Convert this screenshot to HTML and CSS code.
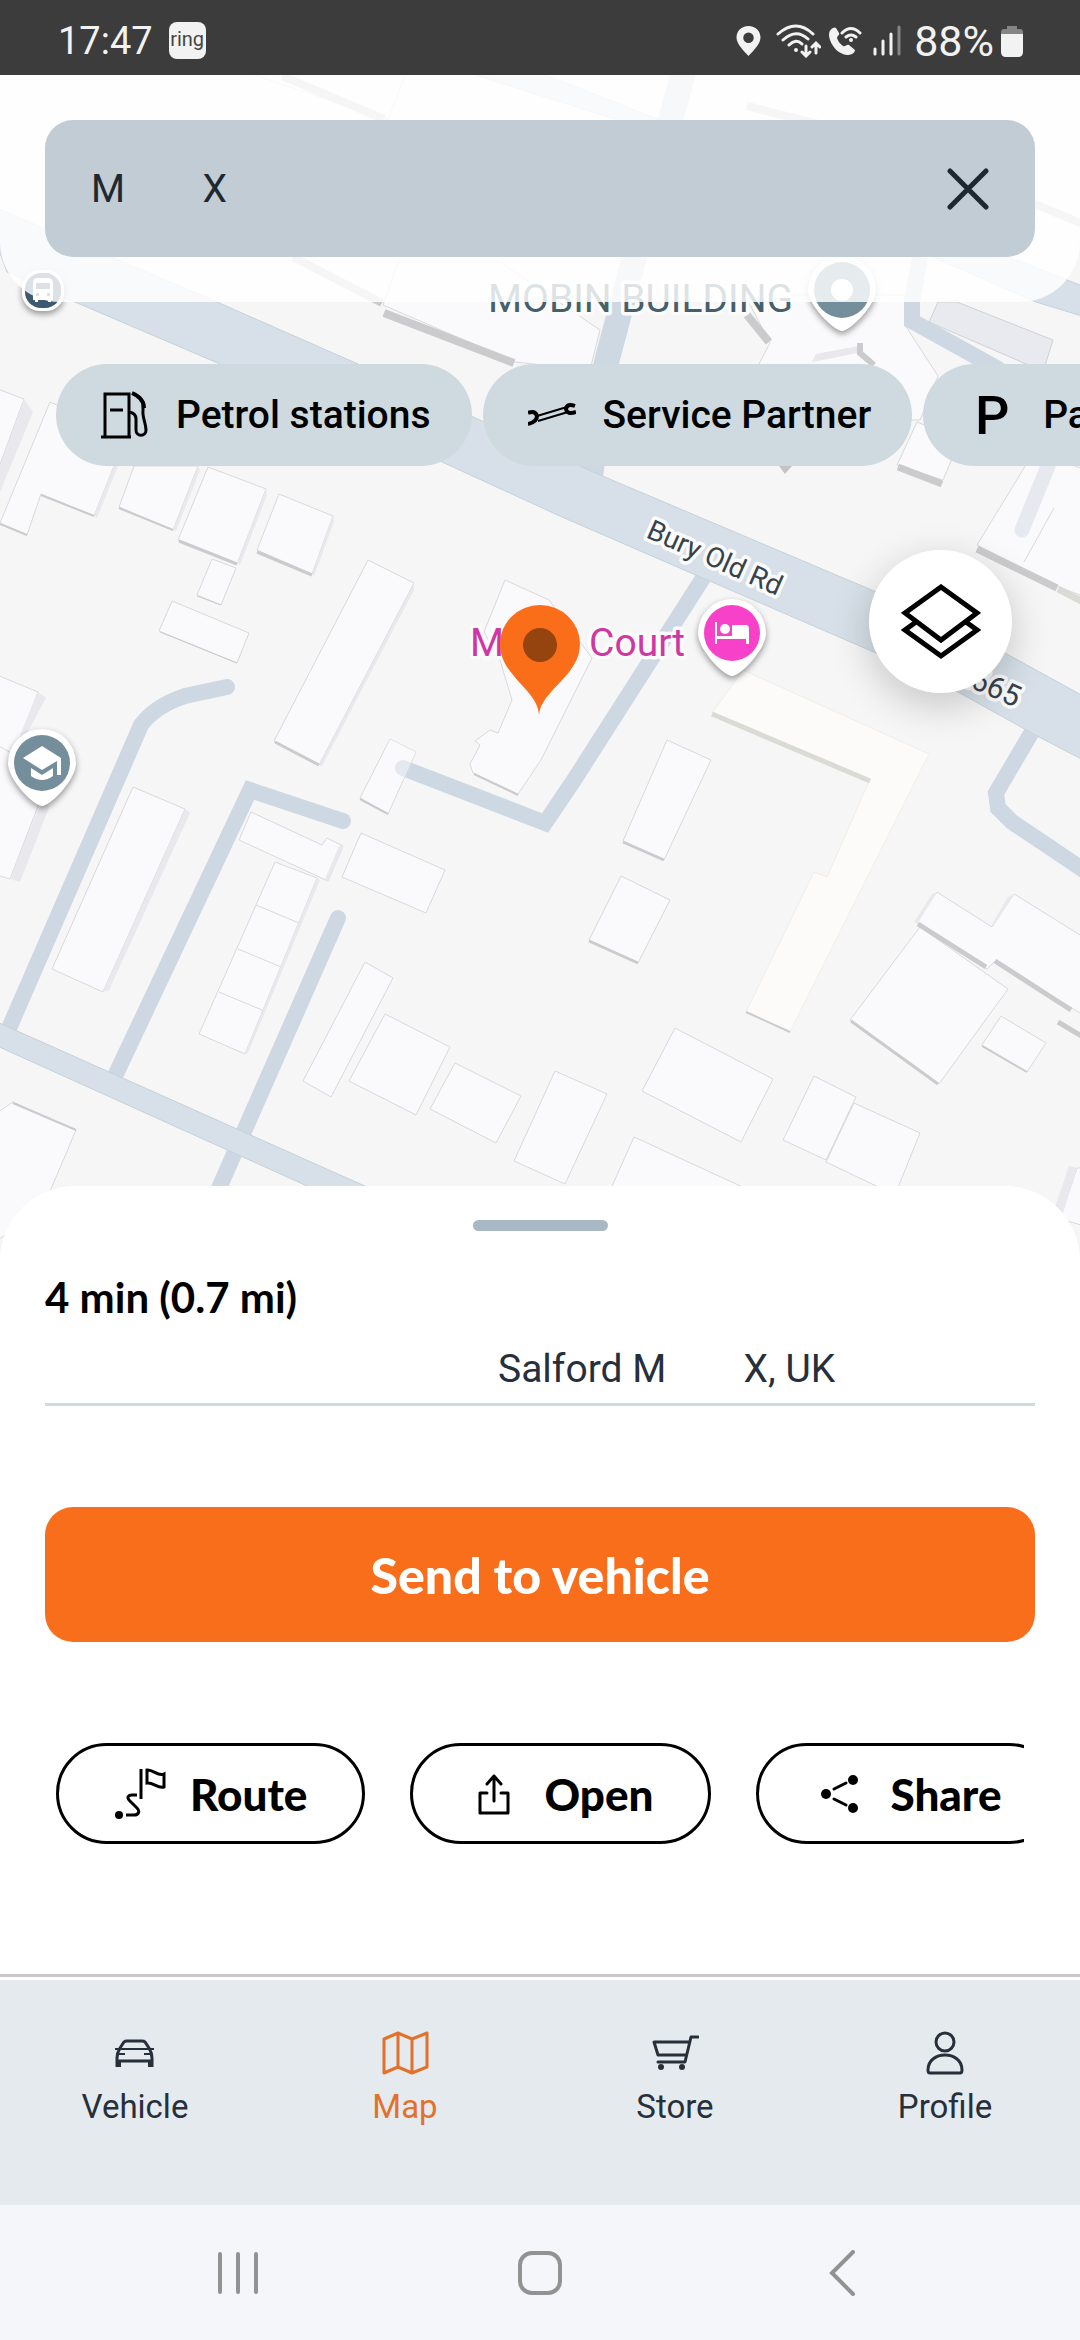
FILE: index.html
```html
<!DOCTYPE html>
<html lang="en">
<head>
    <meta charset="UTF-8">
    <meta name="viewport" content="width=device-width, initial-scale=1.0">
    <title>Map</title>
    <link rel="stylesheet" href="styles.css">
</head>
<body>
    <div class="status-bar">
        <span>17:47</span>
        <span class="app-badge">ring</span>
        <div class="status-icons">
            <svg width="25" height="32" viewBox="0 0 25 32"><path fill="#f2f2f2" fill-rule="evenodd" d="M12.500 1C5.500 1 .5 6 .5 12.500 .5 19 8 26 12.500 31 17 26 24.500 19 24.500 12.500 24.500 6 19.500 1 12.500 1zM12.500 7.500a5 5 0 1 1 0 10.500 5 5 0 0 1 0-10.500z"/></svg>
            <svg class="wifi" width="45" height="34" viewBox="0 0 45 34" fill="none" stroke="#f2f2f2" stroke-width="3" stroke-linecap="round"><path d="M2 10Q20-6 37 10M7 16Q20 4 32 15M13 21Q20 14 26 20M30 22v10m-4-4 4 4 4-4M40 29V19m-4 4 4-4 4 4"/><circle cx="20" cy="26" r="2" fill="#f2f2f2" stroke="none"/></svg>
            <svg width="34" height="32" viewBox="0 0 34 32"><path fill="#f2f2f2" d="M5 3C1 5 0 9 2 15c3 8 9 14 17 15 4 0 8-2 8-5l-6-5c-2-1-4 2-6 1-3-2-5-5-6-8 0-2 3-3 2-5L8 3Q7 2 5 3z"/><path d="M14 8Q23-1 32 8M18 12q5-4 10 0" fill="none" stroke="#f2f2f2" stroke-width="3" stroke-linecap="round"/><circle cx="23" cy="15" r="2" fill="#f2f2f2"/></svg>
            <svg class="signal" width="28" height="31" viewBox="0 0 28 31" fill="none" stroke-width="3" stroke-linecap="round"><path stroke="#f2f2f2" d="M2 24v5M10 16v13M18 9v20"/><path stroke="#868686" d="M26 2v27"/></svg>
            <span class="battery-level">88%</span>
            <svg width="22" height="32" viewBox="0 0 22 32"><path fill="#858585" d="M6 1h10v3h3q3 0 3 3v3H0V7q0-3 3-3h3z"/><path fill="#f2f2f2" d="M0 9h22v18q0 5-5 5H5q-5 0-5-5z"/></svg>
        </div>
    </div>

    <main class="map">
        <svg class="map-canvas" viewBox="0 75 1080 1186" preserveAspectRatio="xMidYMin slice">
            <!-- buildings -->
            <g class="building">
                <path d="M240 75H405L388 120 240 70zM398 262H500L600 330 590 370 515 362 383 305z"/>
                <path d="M745 295H905V325L938 376 920 420H785L740 400 770 343z"/>
                <path d="M-5 388 24 399-5 478z"/>
                <path d="M50 402 100 424 114 466 94 516 41 494 27 535 0 523z"/>
                <path d="M134 466H198L173 530 119 507z"/>
                <path d="M208 467 266 489 237 564 178 540z"/>
                <path d="M279 494 333 516 312 574 257 550z"/>
                <path d="M212 559 236 568 221 605 197 595z"/>
                <path d="M172 601 249 633 237 663 159 631z"/>
                <path d="M368 560 414 583 319 765 274 741z"/>
                <path d="M-3 675 38 692 10 765-3 758z"/>
                <path d="M-3 745 50 775 10 879-3 875z"/>
                <path d="M505 580 549 600 592 658 541 760 518 794 473 773 470 764 480 745 475 741 490 730 498 733 512 700 500 660 484 632z"/>
                <path d="M390 739 416 752 388 814 360 798z"/>
                <path d="M667 740 711 760 664 860 623 841z"/>
                <path d="M621 876 670 900 638 963 589 940z"/>
                <path d="M675 1028 773 1079 741 1142 642 1091z"/>
                <path d="M634 1137 760 1195 608 1195z"/>
                <path d="M814 1076 856 1097 826 1160 783 1140z"/>
                <path d="M854 1103 920 1133 895 1195 826 1162z"/>
                <path d="M555 1071 607 1094 565 1184 514 1161z"/>
                <path d="M937 892 992 927 1014 894 1085 938V1016L995 961 987 969 916 922z"/>
                <path d="M920 927 1008 989 939 1084 850 1020z"/>
                <path d="M1001 1016 1046 1043 1027 1072 982 1045z"/>
                <path d="M1077 1168H1085V1226L1060 1219z"/>
                <path d="M133 787 185 809 103 992 52 969z"/>
                <path d="M251 812 322 845 327 838 343 846 328 881 239 840z"/>
                <path d="M275 862 317 878 245 1054 199 1034zM256 905 299 923M238 949 281 967M219 992 262 1010"/>
                <path d="M361 833 445 870 426 913 342 877z"/>
                <path d="M365 962 393 978 331 1097 303 1081z"/>
                <path d="M385 1014 450 1047 416 1115 349 1081z"/>
                <path d="M455 1063 521 1096 496 1143 430 1109z"/>
                <path d="M-3 1113 13 1102 76 1130 40 1215-3 1240z"/>
                <path d="M917 422 960 440 943 480 897 465z"/>
                <path d="M1035 450 1085 470V597L1057 586 977 545z"/>
                <path d="M1054 508 1024 562"/>
            </g>
            <path class="building-grey" d="M938 302 957 302 1053 340 1043 372 1017 360 929 322z"/>
            <path class="building-beige" d="M743 670 929 754 790 1032 746 1012 814 872 827 877 870 779 712 713z"/>

            <!-- roofs seen from the side -->
            <g class="shade-light">
                <path d="M24 399 33 412 0 492-3 475z"/>
                <path d="M114 466 118 466 97 518 94 516z"/>
                <path d="M198 466 200 470 176 531 173 530z"/>
                <path d="M266 489 267 495 240 565 237 564z"/>
                <path d="M333 516 334 522 314 576 312 574z"/>
                <path d="M414 584 414 590 322 766 319 765z"/>
                <path d="M38 692 46 698 26 735 20 735z"/>
                <path d="M40 805 50 805 20 882 10 879z"/>
                <path d="M185 809 190 813 109 990 103 992z"/>
                <path d="M343 846 328 881 325 879 339 846z"/>
                <path d="M317 878 320 880 248 1053 245 1054z"/>
                <path d="M937 892 932 894 914 922 918 923z"/>
                <path d="M1014 894 1008 897 992 924 993 927z"/>
                <path d="M1069 1166 1077 1168 1062 1216 1054 1210z"/>
                <path d="M812 362 816 354 858 346 863 352z"/>
            </g>
            <g class="shade-dark">
                <path d="M282 76 384 119M293 257 382 303M384 313 514 363" stroke-width="8"/>
                <path d="M747 106 850 132M1030 202 1085 225M747 315 769 342" stroke-width="8"/>
                <path d="M860 343V353L874 365" stroke-width="6"/>
                <path d="M898 467 942 484M977 549 1057 588" stroke-width="7"/>
                <path d="M41 495 94 516M119 508 173 530M0 524 27 535" stroke-width="2"/>
                <path d="M179 541 237 564M257 552 312 575M275 742 319 765" stroke-width="3"/>
                <path d="M160 632 237 663M197 596 221 605" stroke-width="1"/>
                <path d="M360 799 388 814M474 774 518 795" stroke-width="2"/>
                <path d="M623 842 664 860M589 941 638 963" stroke-width="3"/>
                <path d="M918 924 986 967M995 961 1071 1010M1058 1022 1085 1038" stroke-width="5"/>
                <path d="M851 1021 938 1084" stroke-width="3"/>
                <path d="M982 1046 1027 1072M13 1103 76 1130M746 1012 790 1032" stroke-width="2"/>
            </g>
            <path d="M712 714 870 781" stroke="#dbdbd6" stroke-width="5"/>
            <path d="M1058 589 1085 603" stroke="#dbdbd6" stroke-width="7"/>
            <path d="M779 466h13l-7 8z" fill="#c4c4c6"/>

            <!-- roads -->
            <g class="road-small">
                <path d="M227 687 185 696Q155 706 141 725L10 1026" stroke-linecap="round"/>
                <path d="M343 821 250 790 115 1076"/>
                <circle cx="343" cy="821" r="8"/>
                <path d="M338 918 216 1195" stroke-linecap="round"/>
                <path d="M403 768 545 823 574 780 705 575" stroke-linecap="round"/>
                <path d="M1033 730 996 793 998 808 1012 822 1085 871"/>
                <path d="M920 257 912 302V321L1000 370"/>
                <path d="M684 70 606 364 590 480" stroke-width="25"/>
            </g>
            <path class="building-faint" d="M390 739 416 752 403 781 376 770z"/>
            <path d="M1048 466 1022 530" stroke="#e6eaf0" stroke-width="15" stroke-linecap="round"/>
            <path class="road" d="M444 65 520 65 1085 287V317L1036 302 624 122z"/>
            <path class="road" d="M-3 208 43 228 217 302 358 364 593 472 874 591 1005 653 1085 697V761L1039 737 958 692 876 653 698 576 562 517 442 462 220 364 75 302 7 272-3 245z"/>
            <path class="road" d="M-3 1022 385 1195H327L-3 1046z"/>

            <!-- labels -->
            <g class="map-label">
                <text x="488" y="312" font-size="39" fill="#46606b">MOBIN BUILDING</text>
                <text x="470" y="656" font-size="39" fill="#cf37a3">M</text>
                <text x="589" y="656" font-size="39" fill="#cf37a3">Court</text>
                <text transform="translate(645 537) rotate(24)" font-size="28" fill="#37434c">Bury Old Rd</text>
                <text transform="translate(951 679) rotate(24)" font-size="30" fill="#37434c">A665</text>
            </g>

            <!-- places -->
            <g class="place">
                <path d="M842 331C834 331 808 305 808 290a34 34 0 0 1 68 0C876 305 850 331 842 331z"/>
                <path d="M42 806C34 806 8 780 8 763a34 34 0 0 1 68 0C76 780 50 806 42 806z"/>
                <path d="M732 676C724 676 698 650 698 633a34 34 0 0 1 68 0C766 650 740 676 732 676z"/>
                <rect x="22" y="270" width="42" height="41" rx="18"/>
            </g>
            <circle cx="842" cy="290" r="28" fill="#758e9b"/>
            <circle cx="842" cy="290" r="11" fill="#fff"/>
            <rect x="25" y="273" width="36" height="35" rx="16" fill="#3f5a70"/>
            <path fill="#fff" fill-rule="evenodd" d="M38 278h10q5 0 5 5v17h-2v2h-3v-2H38v2h-3v-2h-2v-17q0-5 5-5zM36 283v6h14v-6zM36 293v3h3v-3zM47 293v3h3v-3z"/>
            <circle cx="42" cy="763" r="28" fill="#758e9b"/>
            <path fill="#fff" d="M23 758 42 746 61 758V775H57V761L42 770zM31 768 42 775 53 768V776Q42 784 31 776z"/>
            <circle cx="732" cy="633" r="28" fill="#f741c8"/>
            <path fill="#fff" d="M715 622h2v14h15v-11h14q3 0 3 4v15h-3v-5h-29v5h-2z"/>
            <circle cx="725" cy="629" r="5" fill="#fff"/>
            <path fill="#fa6e19" d="M539 715C538 690 500 676 500 644a40 39 0 0 1 80 0C580 676 541 690 539 715z"/>
            <circle cx="540" cy="645" r="17" fill="#95430f"/>
        </svg>

        <header class="search-panel">
            <form class="search">
                <input type="text" aria-label="Search" value="M        X">
                <button type="button" class="clear-btn" aria-label="Clear">
                    <svg width="42" height="42" viewBox="0 0 42 42" fill="none" stroke="#1d2830" stroke-width="5" stroke-linecap="round"><path d="M3 3 39 39M39 3 3 39"/></svg>
                </button>
            </form>
        </header>

        <div class="chips">
            <button class="chip">
                <svg width="48" height="48" viewBox="0 0 48 48" fill="none" stroke="#000" stroke-width="3"><path d="M4 46V3H28V46M0 46H30M9 19H22"/><path d="M31 2C38 5 43 10 43 17" stroke-width="4"/><path d="M42 10V19C41 26 45 32 45 39 45 46 35 46 35 39V28Q35 22 28 21"/></svg>
                Petrol stations
            </button>
            <button class="chip">
                <svg width="48" height="48" viewBox="0 0 48 48" fill="none" stroke="#000"><path d="M0 22Q7 19 9 25 9 31 0 33M47 15Q39 12 38 18 39 24 48 21" stroke-width="4"/><path d="M9 25 39 16M10 30 40 21" stroke-width="2"/></svg>
                Service Partner
            </button>
            <button class="chip">
                <span class="parking-icon">P</span>
                Parking
            </button>
        </div>

        <button class="layers-btn" aria-label="Map layers">
            <svg width="80" height="76" viewBox="0 0 80 76" fill="none" stroke="#000" stroke-width="5"><path d="M40 3 76 29 40 56 4 29z"/><path d="M15 38 4 46 40 72 76 46 65 38"/></svg>
        </button>
    </main>

    <section class="sheet">
        <div class="handle"></div>
        <h1>4 min (0.7 mi)</h1>
        <p class="address">Salford M        X, UK</p>
        <button class="send-btn">Send to vehicle</button>
        <div class="actions">
            <button class="action">
                <svg width="60" height="60" viewBox="0 0 60 60" fill="none" stroke="#000" stroke-width="3"><circle cx="9" cy="51" r="4" fill="#000" stroke="none"/><path d="M16 51H24C29 51 30 47 27 44L19 36C17 33 18 31 22 31H27M31 5V35M37 6C43 5 48 13 54 10V23C48 25 43 18 37 19z"/></svg>
                Route
            </button>
            <button class="action">
                <svg width="60" height="60" viewBox="0 0 60 60" fill="none" stroke="#000" stroke-width="3" stroke-linecap="round" stroke-linejoin="round"><path d="M23 29H16V49H44V29H37M30 37V12M23 20 30 12 37 20"/></svg>
                Open
            </button>
            <button class="action">
                <svg width="60" height="60" viewBox="0 0 60 60" stroke="#000" stroke-width="3" stroke-linecap="round"><path d="M24 25 36 19M24 35 36 41"/><g stroke="none"><circle cx="16" cy="30" r="5"/><circle cx="43" cy="16" r="5"/><circle cx="43" cy="44" r="5"/></g></svg>
                Share
            </button>
        </div>
    </section>

    <nav class="tabs">
        <a class="tab" href="#">
            <svg width="48" height="48" viewBox="0 0 48 48" fill="none" stroke="currentColor" stroke-width="3"><path d="M9 19 13 13Q14 12 16 12H31Q33 12 34 13L38 19Q41 24 41 29V38M6 38V29Q6 24 9 19M6 32H41"/><path d="M4 20H43M6 25H14M41 25H33" stroke-width="2"/><path d="M8 32V38M39 32V38" stroke-width="4"/></svg>
            Vehicle
        </a>
        <a class="tab active" href="#">
            <svg width="48" height="48" viewBox="0 0 48 48" fill="none" stroke="currentColor" stroke-width="3" stroke-linejoin="round"><path d="M3 10 17 4 31 10 46 4V38L31 44 17 38 3 44zM17 4V38M31 10V44"/></svg>
            Map
        </a>
        <a class="tab" href="#">
            <svg width="48" height="48" viewBox="0 0 48 48" fill="none" stroke="currentColor" stroke-width="3" stroke-linecap="round" stroke-linejoin="round"><path d="M47 8H40L34 33H7M38 13H3L7 26H35"/><g fill="currentColor" stroke="none"><circle cx="10" cy="38" r="3"/><circle cx="31" cy="38" r="3"/></g></svg>
            Store
        </a>
        <a class="tab" href="#">
            <svg width="48" height="48" viewBox="0 0 48 48" fill="none" stroke="currentColor" stroke-width="3"><circle cx="24" cy="13" r="9"/><path d="M7 41C7 21 41 21 41 41Q41 44 39 44H9Q7 44 7 41z"/></svg>
            Profile
        </a>
    </nav>

    <div class="system-bar">
        <button aria-label="Recent apps"><svg width="44" height="46" viewBox="0 0 44 46" stroke="#929292" stroke-width="4" stroke-linecap="round"><path d="M4 4V42M22 4V42M40 4V42"/></svg></button>
        <button aria-label="Home"><svg width="46" height="46" viewBox="0 0 46 46" fill="none" stroke="#929292" stroke-width="4"><rect x="3" y="3" width="40" height="40" rx="12"/></svg></button>
        <button aria-label="Back"><svg width="28" height="46" viewBox="0 0 28 46" fill="none" stroke="#929292" stroke-width="4" stroke-linecap="round"><path d="M25 2 4 23 25 44"/></svg></button>
    </div>
</body>
</html>
```
FILE: styles.css
```css
* {
    box-sizing: border-box;
}
body {
    font-family: Roboto, "Liberation Sans", sans-serif;
    margin: 0;
    min-height: 100vh;
    display: flex;
    flex-direction: column;
    background-color: #fff;
    color: #27303a;
}
button {
    font-family: inherit;
    border: none;
    padding: 0;
    cursor: pointer;
}
svg {
    display: block;
    flex-shrink: 0;
}

/* Status bar */
.status-bar {
    display: flex;
    align-items: center;
    gap: 16px;
    height: 75px;
    padding: 6px 57px 0 58px;
    background-color: #3c3c3c;
    color: #f2f2f2;
    font-size: 38px;
}
.app-badge {
    width: 37px;
    height: 37px;
    border-radius: 8px;
    background-color: #f2f2f2;
    color: #444;
    font-size: 20px;
    line-height: 34px;
    text-align: center;
}
.status-icons {
    display: flex;
    align-items: center;
    gap: 7px;
    margin-left: auto;
}
.wifi {
    margin-left: 8px;
}
.signal {
    margin-left: 4px;
    margin-right: 6px;
}
.battery-level {
    font-size: 43px;
}

/* Map */
.map {
    position: relative;
    flex: 1;
    min-height: 700px;
    padding-bottom: 75px;
    overflow: hidden;
    background-color: #f6f6f6;
}
.map-canvas {
    position: absolute;
    inset: 0;
    width: 100%;
    height: 100%;
}
.building {
    fill: #fafafc;
    stroke: #d9d9dc;
}
.building-grey {
    fill: #e9eaef;
    stroke: #d0d1d6;
}
.building-beige {
    fill: #fcfbf9;
    stroke: #efeeea;
}
.building-faint {
    fill: #fafafc;
    opacity: 0.5;
}
.shade-light {
    fill: #e9e9ed;
}
.shade-dark {
    fill: none;
    stroke: #cbcbcd;
}
.road {
    fill: #d7e0e8;
    stroke: #c6d1da;
}
.road-small {
    fill: none;
    stroke: #cdd8e3;
    stroke-width: 16px;
}
.road-small circle {
    fill: #cdd8e3;
    stroke: none;
}
.map-label {
    stroke: #fbfbfc;
    stroke-width: 7px;
    stroke-linejoin: round;
    paint-order: stroke;
}
.place {
    fill: #fff;
    filter: drop-shadow(0 3px 3px rgba(0, 0, 0, 0.4));
}

.search-panel {
    position: relative;
    padding: 45px;
    border-radius: 0 0 60px 60px;
    background-color: rgba(255, 255, 255, 0.82);
}
.search {
    display: flex;
    align-items: center;
    height: 137px;
    padding: 0 46px;
    border-radius: 28px;
    background-color: #c2ccd5;
}
.search input {
    flex: 1;
    min-width: 0;
    padding: 0;
    border: none;
    outline: none;
    background: none;
    color: #1d2830;
    font-family: inherit;
    font-size: 39px;
}
.clear-btn {
    background: none;
}
.chips {
    position: relative;
    display: flex;
    gap: 11px;
    padding: 62px 0 0 56px;
    overflow: hidden;
}
.chip {
    display: flex;
    flex-shrink: 0;
    align-items: center;
    gap: 27px;
    height: 102px;
    padding: 0 41px 0 45px;
    border-radius: 51px;
    background-color: #cfdae0;
    color: #000;
    font-size: 39px;
    font-weight: 500;
}
.parking-icon {
    width: 48px;
    font-size: 54px;
    text-align: center;
}
.layers-btn {
    position: relative;
    display: flex;
    align-items: center;
    justify-content: center;
    width: 143px;
    height: 143px;
    margin: 84px 68px 0 auto;
    border-radius: 50%;
    background-color: #fff;
    box-shadow: 0 12px 40px rgba(0, 0, 0, 0.2);
}

/* Bottom sheet */
.sheet {
    position: relative;
    margin-top: -75px;
    padding: 34px 45px 130px;
    border-radius: 75px 75px 0 0;
    background-color: #fff;
}
.handle {
    width: 135px;
    height: 11px;
    margin: 0 auto 41px;
    border-radius: 6px;
    background-color: #a8b8c4;
}
h1 {
    margin: 0 0 24px;
    color: #000;
    font-family: Lato, sans-serif;
    font-size: 42px;
    line-height: 50px;
}
.address {
    margin: 0 0 101px;
    padding: 0 0 11px 453px;
    border-bottom: 3px solid #d2dade;
    font-size: 39px;
    line-height: 46px;
    white-space: pre;
}
.send-btn {
    width: 100%;
    height: 135px;
    margin-bottom: 101px;
    border-radius: 28px;
    background-color: #f96e1b;
    color: #fff;
    font-family: Lato, sans-serif;
    font-size: 50px;
    font-weight: 900;
}
.actions {
    display: flex;
    gap: 45px;
    margin: 0 11px;
    overflow: hidden;
}
.action {
    display: flex;
    flex-shrink: 0;
    align-items: center;
    gap: 20px;
    height: 101px;
    padding: 0 55px 0 51px;
    border: 3px solid #000;
    border-radius: 51px;
    background-color: #fff;
    color: #000;
    font-family: Lato, sans-serif;
    font-size: 44px;
    font-weight: 900;
}

/* Tabs */
.tabs {
    display: flex;
    border-top: 3px solid #c9c9c9;
    padding-top: 3px;
}
.tab {
    display: flex;
    flex: 1;
    flex-direction: column;
    align-items: center;
    gap: 10px;
    height: 225px;
    padding-top: 49px;
    background-color: #e5eaef;
    color: #27303a;
    font-size: 33px;
    line-height: 40px;
    text-decoration: none;
}
.tab.active {
    color: #e2712b;
}

.system-bar {
    display: flex;
    height: 135px;
    padding: 0 87px;
    background-color: #f5f6f9;
}
.system-bar button {
    display: flex;
    flex: 1;
    align-items: center;
    justify-content: center;
    background: none;
}
```
